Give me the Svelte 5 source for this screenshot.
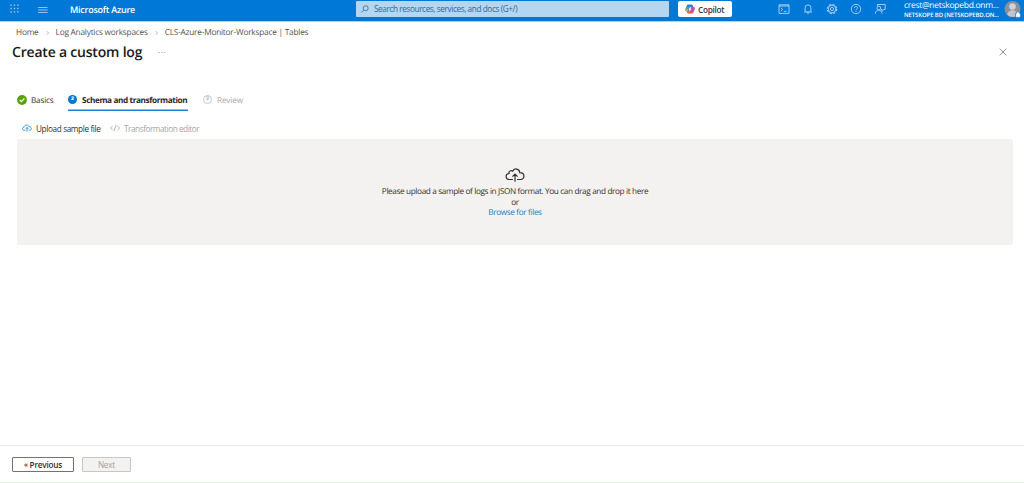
<script>
	const breadcrumbs = [
		{ label: "Home", id: "home" },
		{ label: "Log Analytics workspaces", id: "workspaces" },
		{ label: "CLS-Azure-Monitor-Workspace | Tables", id: "tables" },
	];

	const dots = [1, 4, 7];

	let step = 2;
	let search = "";
</script>

<div class="portal">
	<header>
		<button class="waffle" aria-label="App launcher">
			<svg width="9" height="9" viewBox="0 0 8 8">
				{#each dots as y}
					{#each dots as x}
						<rect x={x - 0.6} y={y - 0.6} width="1.2" height="1.2" />
					{/each}
				{/each}
			</svg>
		</button>
		<button class="menu" aria-label="Portal menu">
			<svg width="10" height="8" viewBox="0 0 10 8"><path d="M0 1.5h9.5M0 4h9.5M0 6.5h9.5" /></svg>
		</button>
		<span class="brand">Microsoft Azure</span>

		<label class="search">
			<svg width="8" height="8" viewBox="0 0 8 8"><circle cx="4.7" cy="3.2" r="2.5" /><path d="M2.9 5 .5 7.4" /></svg>
			<input bind:value={search} placeholder="Search resources, services, and docs (G+/)" />
		</label>

		<button class="copilot">
			<svg width="10" height="10" viewBox="0 0 20 20">
				<path d="M7 1h6c2 0 2.600 1.500 3.100 3l.6 2.500H11L8 15H4.500C1.500 15 .3 13 1 10.500l2-6C4 2 5 1 7 1z" fill="#2583dc" />
				<path d="M3 6h5l-2 9H4.500C1.500 15 .3 13 1 10.500z" fill="#45ac8e" />
				<path d="M1 11h5.500l-1.100 4h-1C1.800 15 .5 13.500 1 11z" fill="#e5b93e" />
				<path d="M13 19H7c-2 0-2.600-1.500-3.100-3l-.4-2H8.500l3.300-8.500h4c3 0 4.200 2 3.500 4.500l-2 6C16.500 18 15 19 13 19z" fill="#e8506f" />
				<path d="M11.800 5.500h4c3 0 4.200 2 3.500 4.500l-1 3H10z" fill="#a85bd0" />
				<path d="M3.500 14.500h7L9 19H7c-2 0-3-1.800-3.500-4.500z" fill="#ef713f" />
				<path d="m9 7 3-.5L10.800 13H7.500z" fill="#fff" />
			</svg>
			<span>Copilot</span>
		</button>

		<nav>
			<svg viewBox="0 0 12 12"><path d="M1 1.800h10v8.600H1zM1 3h10M2.800 4.800l1.900 1.600-1.900 1.600M5.800 8.400h2.800" /></svg>
			<svg viewBox="0 0 12 12"><path d="M3.100 8.700V4.800a2.900 2.900 0 0 1 5.800 0v3.900M2 8.900h8M4.800 9.200a1.200 1.200 0 0 0 2.400 0" /></svg>
			<svg viewBox="0 0 12 12">
				<circle cx="6" cy="6" r="4.700" stroke-dasharray="2.200 1.500" stroke-width="1" />
				<circle cx="6" cy="6" r="3.800" />
				<circle cx="6" cy="6" r="1.600" />
			</svg>
			<svg viewBox="0 0 12 12"><circle cx="6" cy="6" r="4.700" /><path d="M4.500 4.900c0-2 3-2 3-.1C7.500 5.800 6 5.900 6 7.100M6 8v1" /></svg>
			<svg viewBox="0 0 12 12"><path d="M3.400 3.100V1.500h7.800v5H9.800L8 8.200V6.500H7" /><circle cx="4.800" cy="5.100" r="1.900" /><path d="M1.300 10.700c0-4.700 6.500-4.700 6.800 0" /></svg>
		</nav>

		<div class="account">
			<span class="email">crest@netskopebd.onm...</span>
			<span class="tenant">NETSKOPE BD (NETSKOPEBD.ON...</span>
		</div>
		<svg class="avatar" width="18" height="18" viewBox="0 0 18 18">
			<circle cx="8.500" cy="9" r="8" fill="#8b8f99" />
			<circle cx="8.500" cy="6.500" r="3.300" fill="#d2d2d6" />
			<path d="M3.300 15c.3-6.300 10-6.300 10.400 0a8 8 0 0 1-10.400 0z" fill="#c2c4ca" />
			<circle cx="14" cy="15" r="3" fill="#0878d4" />
			<path d="M12.200 14h3.600v2.800h-3.600zM13 14v-1.200h2V14" fill="#fff" stroke="#fff" stroke-width=".7" />
		</svg>
	</header>

	<div class="breadcrumbs">
		{#each breadcrumbs as crumb, i}
			{#if i > 0}
				<svg width="4" height="6" viewBox="0 0 4 6"><path d="m.8 1.200 1.800 1.800L.8 4.800" /></svg>
			{/if}
			<span class={crumb.id}>{crumb.label}</span>
		{/each}
	</div>

	<div class="title">
		<h1>Create a custom log</h1>
		<svg width="8" height="3" viewBox="0 0 8 3"><path d="M.5 1.500h1M3.500 1.500h1M6.500 1.500h1" /></svg>
		<button class="close" aria-label="Close">
			<svg width="8" height="8" viewBox="0 0 8 8"><path d="m.7.700 6.600 6.600M7.300.700.700 7.300" /></svg>
		</button>
	</div>

	<div class="tabs">
		<div class="tab basics">
			<svg width="10" height="10" viewBox="0 0 10 10"><circle cx="5" cy="5" r="4.900" fill="#57a300" /><path d="m2.700 5 1.700 1.700 3-3.200" stroke="#fff" stroke-width="1.200" /></svg>
			<span>Basics</span>
		</div>
		<div class="tab schema" class:active={step === 2}>
			<b class="number">2</b>
			<span>Schema and transformation</span>
		</div>
		<div class="tab review">
			<b class="number">3</b>
			<span>Review</span>
		</div>
	</div>

	<div class="toolbar">
		<button class="upload">
			<svg width="10" height="8" viewBox="0 0 20 14"><path d="M7 11.500H4.500C.3 11.500-.2 6 4 5.500 4.500 0 12.500-.3 14 4.300c6-.3 6.200 7.200 1 7.200h-2M10 14V6M7.500 8.500 10 6l2.500 2.500" /></svg>
			<span>Upload sample file</span>
		</button>
		<button class="editor" disabled>
			<svg width="10" height="8" viewBox="0 0 10 8"><path d="M2.700 1.700.5 4l2.200 2.300M7.300 1.700 9.500 4 7.300 6.300M6 .7 4 7.300" /></svg>
			<span>Transformation editor</span>
		</button>
	</div>

	<div class="dropzone">
		<svg width="20" height="14" viewBox="0 0 20 14"><path d="M8 11.500H4.500C.3 11.500-.2 6 4 5.500 3.300 3 6.500 2 7.700 3.200 9-.3 14.700.5 14.700 4.600c5.500-.3 5.500 6.900.8 6.900H12M10 13.800V6M7.400 8.600 10 6l2.600 2.600" /></svg>
		<p class="hint">Please upload a sample of logs in JSON format. You can drag and drop it here</p>
		<p class="or">or</p>
		<a href="#browse">Browse for files</a>
	</div>

	<footer>
		<button class="previous"><small>«</small> Previous</button>
		<button class="next" disabled>Next</button>
	</footer>
</div>

<style>
	:global(body) {
		background: #fff;
		overflow: hidden;
	}

	.portal {
		display: flex;
		flex-direction: column;
		height: 483px;
		box-sizing: border-box;
		border-bottom: 1px solid #dff3dc;
		color: #323130;
		font: 8.2px/11px "Open Sans", "Noto Sans", sans-serif;
		letter-spacing: -0.36px;
		text-rendering: geometricPrecision;
	}

	button {
		display: flex;
		align-items: center;
		padding: 0;
		border: 0;
		background: none;
		color: inherit;
		font: inherit;
		letter-spacing: inherit;
	}

	span, p {
		white-space: nowrap;
	}

	svg {
		display: block;
		flex: none;
		fill: none;
		stroke: currentColor;
		stroke-width: 0.8;
	}

	header {
		display: flex;
		flex: none;
		height: 22px;
		box-sizing: border-box;
		border-bottom: 1px solid #a9d3f3;
		background: #0078d7;
		color: #fff;
	}
	.waffle {
		width: 29px;
		padding: 0 0 4px 10px;
	}
	.waffle svg {
		fill: #a5d0f3;
		stroke: none;
	}
	.menu {
		width: 41px;
		padding: 0 0 2px 9px;
		color: #b3d8f5;
	}
	.brand {
		width: 286px;
		font-size: 9px;
		font-weight: 600;
		line-height: 19px;
		letter-spacing: -0.25px;
	}
	.search {
		display: flex;
		align-items: center;
		gap: 5px;
		width: 313px;
		height: 16px;
		margin-top: 1px;
		padding-left: 5px;
		box-sizing: border-box;
		border-radius: 1px;
		background: #b3d6f2;
		color: #2d6999;
	}
	.search input {
		flex: 1;
		height: 12px;
		margin-bottom: 1px;
		padding: 0;
		border: 0;
		outline: 0;
		background: none;
		font: inherit;
		letter-spacing: -0.39px;
	}
	.search input::placeholder {
		color: #2d6999;
	}
	.copilot {
		gap: 3px;
		width: 54px;
		height: 16px;
		margin: 1px 0 0 9px;
		padding-left: 7px;
		border-radius: 2px;
		background: #fff;
		color: #30334e;
		font-weight: 600;
		letter-spacing: -0.25px;
	}
	.copilot svg {
		stroke: none;
	}
	nav {
		display: flex;
		gap: 12px;
		margin: 3px 0 0 46px;
		color: #c7e2f8;
	}
	nav svg {
		width: 12px;
		height: 12px;
	}
	.account {
		width: 100px;
		margin-left: 18px;
	}
	.account span {
		display: block;
	}
	.email {
		font-size: 8.5px;
		line-height: 12px;
		letter-spacing: -0.28px;
	}
	.tenant {
		font-size: 6px;
		font-weight: 600;
		line-height: 7px;
		letter-spacing: -0.12px;
	}
	.avatar {
		stroke: none;
	}

	.breadcrumbs {
		display: flex;
		align-items: center;
		height: 11px;
		margin: 5px 0 0 16px;
		color: #555;
		font-size: 8.3px;
		letter-spacing: -0.23px;
	}
	.breadcrumbs svg {
		margin: 0 6px 0 7px;
		color: #888;
		stroke-width: 0.6;
	}

	.title {
		display: flex;
		align-items: center;
		height: 20px;
		margin: 4px 17px 0 12px;
	}
	h1 {
		width: 146px;
		margin: 2px 0 0;
		color: #1b1a19;
		font-size: 14px;
		font-weight: 600;
		line-height: 20px;
		letter-spacing: -0.2px;
		white-space: nowrap;
	}
	.title svg {
		color: #777;
	}
	.close {
		margin-left: auto;
	}

	.tabs {
		display: flex;
		height: 19px;
		margin: 29px 0 0 17px;
	}
	.tab {
		display: flex;
		align-items: center;
		gap: 4px;
		height: 20px;
		padding-bottom: 1px;
		box-sizing: border-box;
	}
	.basics {
		width: 37px;
		margin-right: 14px;
		letter-spacing: -0.2px;
	}
	.basics svg {
		margin-bottom: 2px;
		stroke: none;
	}
	.schema {
		gap: 5px;
		width: 120px;
		margin-right: 15px;
		letter-spacing: -0.38px;
	}
	.schema.active {
		box-shadow: inset 0 -1.5px #1683d6;
		font-weight: 700;
		color: #292827;
	}
	.number {
		flex: none;
		width: 9px;
		height: 9px;
		margin-bottom: 2px;
		box-sizing: border-box;
		border-radius: 50%;
		background: #0078d4;
		color: #fff;
		font-size: 5px;
		line-height: 9px;
		letter-spacing: 0;
		text-align: center;
	}
	.review {
		gap: 5px;
		color: #aaa8a6;
		letter-spacing: -0.15px;
	}
	.review .number {
		border: 1px solid #c8c6c4;
		background: none;
		color: #aaa8a6;
		line-height: 7px;
	}

	.toolbar {
		display: flex;
		gap: 10px;
		height: 12px;
		margin: 12px 0 5px 22px;
	}
	.toolbar button {
		gap: 4px;
	}
	.upload {
		width: 78px;
	}
	.upload svg {
		color: #1584c9;
		stroke-width: 1.6;
	}
	.editor {
		color: #a8a6a4;
		letter-spacing: -0.44px;
	}

	.dropzone {
		display: flex;
		flex-direction: column;
		align-items: center;
		height: 106px;
		box-sizing: border-box;
		margin: 0 11px 0 17px;
		padding-top: 29px;
		border-radius: 1px;
		background: #f3f2f1;
	}
	.dropzone svg {
		margin-bottom: 4px;
		stroke-width: 1.2;
	}
	p {
		margin: 0;
	}
	.dropzone a {
		color: #1581bf;
		line-height: 10px;
		text-decoration: none;
	}

	footer {
		display: flex;
		gap: 8px;
		height: 37px;
		box-sizing: border-box;
		margin-top: auto;
		padding: 11px 0 0 12px;
		border-top: 1px solid #edebe9;
	}
	footer button {
		justify-content: center;
		height: 15px;
		padding-bottom: 1px;
		border: 1px solid #75736f;
		border-radius: 1px;
		letter-spacing: -0.2px;
	}
	.previous {
		width: 62px;
		font-weight: 600;
	}
	.previous small {
		margin-right: 2px;
		font-size: 7px;
	}
	.next {
		width: 49px;
		border-color: #c8c6c4;
		background: #f3f2f1;
		color: #a19f9d;
	}
</style>
